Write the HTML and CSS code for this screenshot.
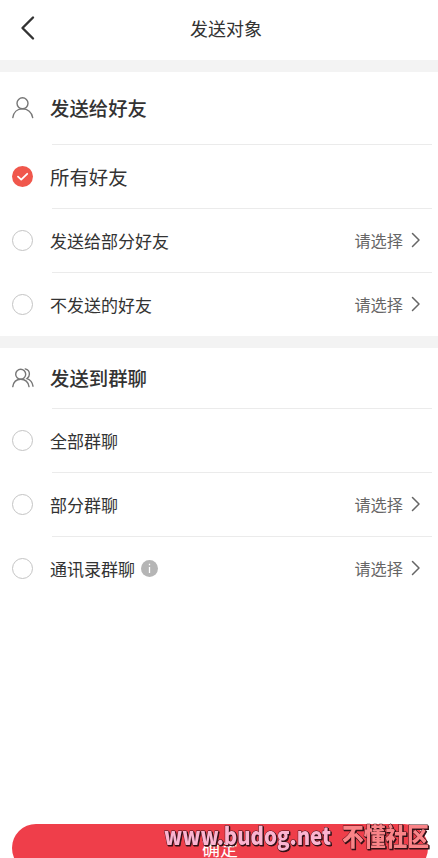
FILE: index.html
```html
<!DOCTYPE html>
<html lang="zh-CN">
<head>
    <meta charset="UTF-8">
    <meta name="viewport" content="width=device-width, initial-scale=1.0">
    <title>发送对象</title>
    <link rel="stylesheet" href="styles.css">
</head>
<body>
    <!-- Header -->
    <header>
        <button class="back-button" aria-label="返回">
            <svg width="16" height="26" viewBox="0 0 16 26"><path d="M13 2.5 2.5 13 13 23.5"/></svg>
        </button>
        <h1>发送对象</h1>
    </header>

    <main>
        <!-- Friends -->
        <section class="group">
            <div class="group-title">
                <svg class="group-icon" width="22" height="22" viewBox="0 0 22 22">
                    <circle cx="10.5" cy="6.3" r="5.5"/>
                    <path d="M.8 20.6C1.5 15.2 5.3 11.8 10.5 11.8S19.9 15.2 20.7 20.6"/>
                </svg>
                <h2>发送给好友</h2>
            </div>
            <div class="row">
                <span class="radio checked">
                    <svg width="21" height="21" viewBox="0 0 21 21"><path d="M6 10.7 9.2 13.6 15.2 7.8"/></svg>
                </span>
                <span class="label large">所有好友</span>
            </div>
            <div class="row">
                <span class="radio"></span>
                <span class="label">发送给部分好友</span>
                <span class="choose">请选择</span>
                <svg class="arrow" width="10" height="16" viewBox="0 0 10 16"><path d="M1.5 1.5 8 8 1.5 14.5"/></svg>
            </div>
            <div class="row">
                <span class="radio"></span>
                <span class="label">不发送的好友</span>
                <span class="choose">请选择</span>
                <svg class="arrow" width="10" height="16" viewBox="0 0 10 16"><path d="M1.5 1.5 8 8 1.5 14.5"/></svg>
            </div>
        </section>

        <!-- Group chats -->
        <section class="group">
            <div class="group-title compact">
                <svg class="group-icon" width="22" height="22" viewBox="0 0 22 22">
                    <circle cx="8.7" cy="7.3" r="5"/>
                    <path d="M.8 19.6C1.5 15.2 4.5 12.3 8.7 12.3S16.2 15.2 17 19.6"/>
                    <path d="M13.2 1.9C15.9 2.6 17.4 4.6 17.4 7 17.4 8.9 16.6 10.6 15 11.7 18.2 12.9 20.4 15.5 21 19.2"/>
                </svg>
                <h2>发送到群聊</h2>
            </div>
            <div class="row">
                <span class="radio"></span>
                <span class="label">全部群聊</span>
            </div>
            <div class="row">
                <span class="radio"></span>
                <span class="label">部分群聊</span>
                <span class="choose">请选择</span>
                <svg class="arrow" width="10" height="16" viewBox="0 0 10 16"><path d="M1.5 1.5 8 8 1.5 14.5"/></svg>
            </div>
            <div class="row">
                <span class="radio"></span>
                <span class="label">通讯录群聊</span>
                <svg class="info" width="17" height="17" viewBox="0 0 17 17">
                    <circle cx="8.5" cy="8.5" r="8.5"/>
                    <path d="M8.5 3.8V5.3M8.5 7V13"/>
                </svg>
                <span class="choose">请选择</span>
                <svg class="arrow" width="10" height="16" viewBox="0 0 10 16"><path d="M1.5 1.5 8 8 1.5 14.5"/></svg>
            </div>
        </section>
    </main>

    <!-- Confirm button -->
    <footer>
        <button class="confirm-button">确定</button>
    </footer>

    <!-- Site watermark -->
    <svg class="watermark" width="276" height="38" viewBox="0 0 276 38">
        <text class="mark-site" x="3" y="24.5" textLength="167" lengthAdjust="spacingAndGlyphs">www.budog.net</text>
        <text class="mark-name" x="181" y="26" textLength="87" lengthAdjust="spacingAndGlyphs">不懂社区</text>
    </svg>
</body>
</html>
```
FILE: styles.css
```css
/* General Styles */
* {
    margin: 0;
    padding: 0;
    box-sizing: border-box;
}

body {
    display: flex;
    flex-direction: column;
    height: 858px;
    overflow: hidden;
    background: #fff;
    color: #333;
    font-family: "Noto Sans CJK SC", sans-serif;
}

button {
    border: none;
    background: none;
    font-family: inherit;
    cursor: pointer;
}

svg {
    display: block;
    flex: none;
    fill: none;
}

/* Header */
header {
    display: grid;
    grid-template-columns: 60px 1fr 60px;
    align-items: center;
    height: 60px;
    padding: 0 7px 4px;
}

.back-button {
    padding-left: 13px;
}

.back-button svg {
    stroke: #333;
    stroke-width: 2.4;
    stroke-linecap: round;
    stroke-linejoin: round;
}

h1 {
    padding-left: 14px;
    text-align: center;
    font-size: 18px;
    font-weight: 400;
    line-height: 26px;
}

/* Groups */
.group {
    border-top: 12px solid #f3f3f3;
}

.group-title {
    display: flex;
    align-items: center;
    height: 72px;
    padding-left: 12px;
}

.group-title.compact {
    height: 60px;
}

.group-icon {
    margin-right: 16px;
    stroke: #777;
    stroke-width: 1.4;
    stroke-linecap: round;
}

h2 {
    font-size: 19.4px;
    font-weight: 500;
    line-height: 28px;
}

/* Rows */
.row {
    display: flex;
    align-items: center;
    height: 64px;
    padding: 0 17px 0 12px;
    background: linear-gradient(#ebebeb, #ebebeb) 52px 0 / 380px 1px no-repeat;
}

.radio {
    width: 21px;
    height: 21px;
    margin-right: 17px;
    border: 1px solid #c4c4c4;
    border-radius: 50%;
}

.radio.checked {
    border: none;
    background: #f0574c;
}

.radio.checked svg {
    stroke: #fff;
    stroke-width: 1.8;
    stroke-linecap: round;
    stroke-linejoin: round;
}

.label {
    padding-top: 1px;
    font-size: 17px;
    line-height: 24px;
}

.label.large {
    font-size: 19.4px;
}

.info {
    margin-left: 6px;
    fill: #b5b5b5;
    stroke: none;
}

.info path {
    stroke: #fff;
    stroke-width: 1.3;
}

.choose {
    margin-left: auto;
    color: #666;
    font-size: 16.2px;
    line-height: 24px;
}

.arrow {
    margin-left: 8px;
    stroke: #666;
    stroke-width: 1.5;
    stroke-linecap: round;
    stroke-linejoin: round;
}

/* Footer */
footer {
    flex: none;
    height: 34px;
    margin-top: auto;
    padding: 0 10px 0 12px;
}

.confirm-button {
    width: 100%;
    height: 48px;
    border-radius: 24px;
    background: #ef3e4a;
    color: #fff;
    font-size: 18px;
    line-height: 48px;
}

/* Watermark */
.watermark {
    position: absolute;
    left: 161px;
    top: 820px;
    paint-order: stroke;
    stroke: #3a1218;
    stroke-width: 1;
    stroke-linejoin: round;
    filter: drop-shadow(1px 1px 0 #2c1015);
}

.mark-site {
    fill: #fbb4d0;
    font-size: 24px;
    font-weight: 900;
}

.mark-name {
    fill: #fa8488;
    font-size: 25px;
    font-weight: 900;
}
```
